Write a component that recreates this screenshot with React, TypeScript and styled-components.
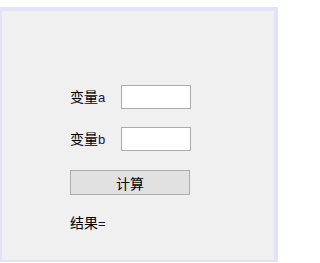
import React from "react";
import styled, { createGlobalStyle } from "styled-components";

const GlobalStyle = createGlobalStyle`
  html, body {
    margin: 0;
    padding: 0;
    background: #ffffff;
  }
  body {
    font-family: "Noto Sans CJK SC", "Liberation Sans", sans-serif;
  }
`;

const Frame = styled.div`
  box-sizing: border-box;
  width: 278px;
  height: 255px;
  margin-top: 7px;
  border-style: solid;
  border-color: #e2e2fa;
  border-width: 4px 4px 2px 2px;
  background: #f0f0f0;
`;

const Form = styled.div`
  display: flex;
  flex-direction: column;
  padding: 74px 0 0 68px;
`;

const Row = styled.div<{ $gap: number }>`
  display: flex;
  align-items: center;
  height: 24px;
  margin-bottom: ${(p) => p.$gap}px;
`;

const Label = styled.span`
  width: 51px;
  font-size: 14px;
  line-height: 16px;
  color: #000;
  font-family: "Noto Sans CJK SC", sans-serif;
`;

const Latin = styled.span`
  font-family: "Liberation Sans", sans-serif;
  font-size: 13px;
  color: #1a0a50;
`;

const Field = styled.input`
  box-sizing: border-box;
  width: 70px;
  height: 24px;
  margin: 0;
  padding: 0 3px;
  border: 1px solid #ababab;
  background: #ffffff;
  outline: none;
`;

const Button = styled.button`
  box-sizing: border-box;
  width: 120px;
  height: 25px;
  margin: 0 0 19px 0;
  padding: 0;
  border: 1px solid #adadad;
  background: #e1e1e1;
  font-family: "Noto Sans CJK SC", sans-serif;
  font-size: 14px;
  line-height: 16px;
  color: #000;
`;

const Result = styled.div`
  font-size: 14px;
  line-height: 16px;
  color: #000;
`;

export default function App() {
  return (
    <>
      <GlobalStyle />
      <Frame>
        <Form>
          <Row $gap={18}>
            <Label>
              变量<Latin>a</Latin>
            </Label>
            <Field />
          </Row>
          <Row $gap={19}>
            <Label>
              变量<Latin>b</Latin>
            </Label>
            <Field />
          </Row>
          <Button>计算</Button>
          <Result>
            结果<Latin>=</Latin>
          </Result>
        </Form>
      </Frame>
    </>
  );
}
